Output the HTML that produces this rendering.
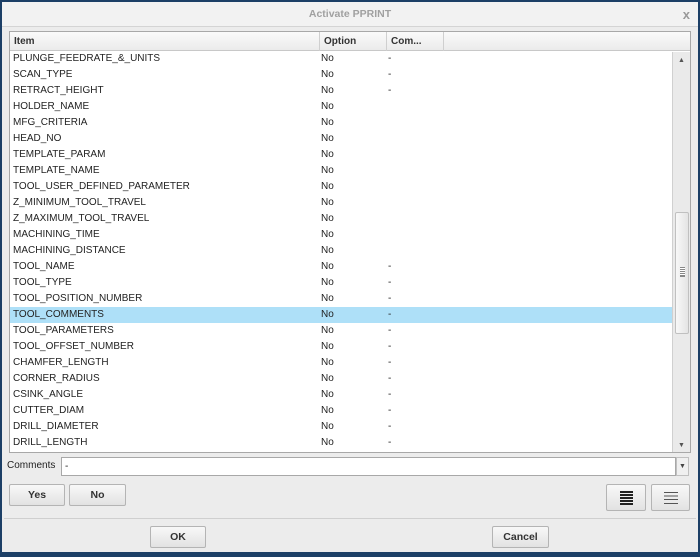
<!DOCTYPE html>
<html><head><style>
*{box-sizing:border-box;margin:0;padding:0}
body{width:700px;height:557px;background:#1c3f66;font-family:"Liberation Sans",sans-serif;font-size:10px;color:#222;position:relative;overflow:hidden}
.win{position:absolute;left:2px;top:2px;width:696px;height:550px;background:#ececec}
.title{position:absolute;left:0;top:0;width:696px;height:25px;background:#f2f2f2;border-bottom:1px solid #d4d4d4;text-align:center;line-height:25px;color:#a0a0a0;font-weight:bold;font-size:10.5px}
.x{position:absolute;right:8px;top:0;color:#999;font-size:13px;font-weight:bold}
.tbl{position:absolute;left:7px;top:29px;width:682px;height:422px;background:#fff;border:1px solid #a8a8a8}
.hdr{position:absolute;left:0;top:0;width:680px;height:19px;background:linear-gradient(#fafafa,#ebebeb);border-bottom:1px solid #c8c8c8;font-weight:bold;line-height:19px;color:#333}
.hdr span{position:absolute;top:0;height:19px;border-right:1px solid #cfcfcf;padding-left:4px}
.row{position:absolute;left:0;width:662px;height:16px;line-height:16px}
.row span{position:absolute;top:0}
.sel{background:#aee0f8}
.sb{position:absolute;left:662px;top:20px;width:18px;height:400px;background:#eaeaea;border-left:1px solid #d0d0d0}
.thumb{position:absolute;left:2px;top:160px;width:14px;height:122px;background:linear-gradient(90deg,#f8f8f8,#e4e4e4);border:1px solid #c0c0c0;border-radius:2px}
.btn{position:absolute;background:linear-gradient(#f8f8f8,#e2e2e2);border:1px solid #b4b4b4;border-radius:2px;text-align:center;font-weight:bold;color:#333;font-size:10.5px}
</style></head><body>
<div class="win">
<div class="title">Activate PPRINT<span class="x">x</span></div>
<div class="tbl">
<div class="hdr"><span style="left:0;width:310px">Item</span><span style="left:310px;width:67px">Option</span><span style="left:377px;width:57px">Com...</span></div>
<div id="rows"></div>
<div class="sb"><div style="position:absolute;left:5px;top:5px;font-size:7px;color:#555">▲</div><div class="thumb"><div style="position:absolute;left:4px;top:54px;width:5px;height:10px;border-top:1px solid #888;border-bottom:1px solid #888;background:repeating-linear-gradient(#fff 0 1px,#888 1px 2px)"></div></div><div style="position:absolute;left:5px;bottom:3px;font-size:7px;color:#555">▼</div></div>
</div>
<div style="position:absolute;left:5px;top:458px">Comments</div>
<div style="position:absolute;left:59px;top:455px;width:615px;height:19px;background:#fff;border:1px solid #a8a8a8;padding-left:3px;line-height:17px">-</div>
<div style="position:absolute;left:674px;top:455px;width:13px;height:19px;background:#f0f0f0;border:1px solid #c0c0c0;font-size:7px;text-align:center;line-height:17px;color:#444">▼</div>
<div class="btn" style="left:7px;top:482px;width:56px;height:22px;line-height:20px">Yes</div>
<div class="btn" style="left:67px;top:482px;width:57px;height:22px;line-height:20px">No</div>
<div class="btn" style="left:604px;top:482px;width:40px;height:27px"><div style="position:absolute;left:13px;top:6px;width:13px;height:14px;background:repeating-linear-gradient(#222 0 2px,#f0f0f0 2px 3px)"></div></div>
<div class="btn" style="left:649px;top:482px;width:39px;height:27px"><div style="position:absolute;left:12px;top:7px;width:14px;height:12px;background:repeating-linear-gradient(#555 0 1px,transparent 1px 3.6px)"></div></div>
<div style="position:absolute;left:2px;top:516px;width:692px;border-top:1px solid #cfcfcf"></div>
<div class="btn" style="left:148px;top:524px;width:56px;height:22px;line-height:20px">OK</div>
<div class="btn" style="left:490px;top:524px;width:57px;height:22px;line-height:20px">Cancel</div>
</div>
<script>
var d=[["PLUNGE_FEEDRATE_&_UNITS","-"],["SCAN_TYPE","-"],["RETRACT_HEIGHT","-"],["HOLDER_NAME",""],["MFG_CRITERIA",""],["HEAD_NO",""],["TEMPLATE_PARAM",""],["TEMPLATE_NAME",""],["TOOL_USER_DEFINED_PARAMETER",""],["Z_MINIMUM_TOOL_TRAVEL",""],["Z_MAXIMUM_TOOL_TRAVEL",""],["MACHINING_TIME",""],["MACHINING_DISTANCE",""],["TOOL_NAME","-"],["TOOL_TYPE","-"],["TOOL_POSITION_NUMBER","-"],["TOOL_COMMENTS","-"],["TOOL_PARAMETERS","-"],["TOOL_OFFSET_NUMBER","-"],["CHAMFER_LENGTH","-"],["CORNER_RADIUS","-"],["CSINK_ANGLE","-"],["CUTTER_DIAM","-"],["DRILL_DIAMETER","-"],["DRILL_LENGTH","-"]];
var h="";d.forEach(function(r,i){h+='<div class="row'+(i==16?' sel':'')+'" style="top:'+(19+i*16)+'px"><span style="left:3px">'+r[0].replace(/&/g,'&amp;')+'</span><span style="left:311px">No</span><span style="left:378px">'+r[1]+'</span></div>'});
document.getElementById('rows').innerHTML=h;
</script>
</body></html>
